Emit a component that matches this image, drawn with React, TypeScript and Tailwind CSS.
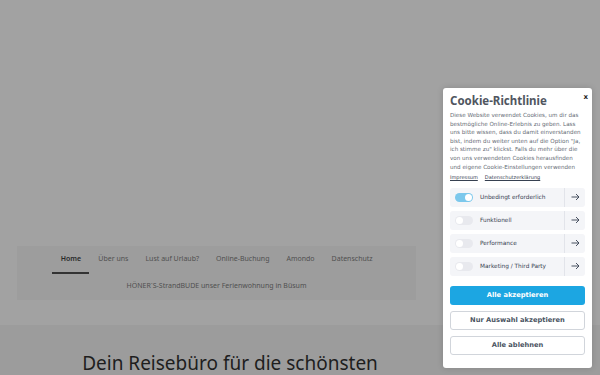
const navItems = ['Home', 'Über uns', 'Lust auf Urlaub?', 'Online-Buchung', 'Amondo', 'Datenschutz'];

const categories = [
  { label: 'Unbedingt erforderlich', on: true },
  { label: 'Funktionell', on: false },
  { label: 'Performance', on: false },
  { label: 'Marketing / Third Party', on: false },
];

const Arrow = () => (
  <svg width="9" height="8" viewBox="0 0 9 8" fill="none" stroke="#374151" strokeWidth="0.9">
    <path d="M0.5 4H8M5 1L8 4L5 7" />
  </svg>
);

export default function App() {
  return (
    <div className="relative h-[375px] w-[600px] overflow-hidden bg-[#a2a2a2] font-['Noto_Sans',sans-serif]">
      {/* page behind overlay */}
      <div className="flex h-full flex-col">
        <div className="h-[246px] shrink-0" />
        <div className="mx-[17px] flex h-[54px] w-[399px] shrink-0 flex-col items-center bg-[#9d9d9d]">
          <nav className="mt-[7px] flex gap-[17px] text-[7px] text-[#505050]">
            {navItems.map((item, i) => (
              <div key={item} className="flex flex-col items-center">
                <span className={`leading-[12px] ${i === 0 ? 'font-semibold text-[#2a2a2a]' : ''}`}>{item}</span>
                {i === 0 && <div className="-mx-[8px] mt-[7px] h-[2px] w-[37px] shrink-0 bg-[#333]" />}
              </div>
            ))}
          </nav>
          <p className="mt-[7px] text-[7px] text-[#505050]">HÖNER´S-StrandBUDE unser Ferienwohnung in Büsum</p>
        </div>
        <div className="h-[25px] shrink-0" />
        <div className="flex flex-1 justify-center bg-[#9c9c9c] pt-[24px] pr-[140px]">
          <h1 className="whitespace-nowrap text-[19px] leading-[28px] text-[#1e1e1e]">Dein Reisebüro für die schönsten</h1>
        </div>
      </div>

      {/* cookie modal */}
      <div className="absolute left-[443px] top-[88px] flex h-[280px] w-[149px] flex-col rounded-[3px] bg-white px-[7px] pt-[5px] shadow-[0_0_6px_rgba(0,0,0,0.15)]">
        <div className="flex items-start justify-between">
          <h2 className="text-[11.5px] font-bold leading-[16px] text-[#50565f]">Cookie-Richtlinie</h2>
          <span className="-mr-[3px] -mt-[1px] font-['DejaVu_Sans',sans-serif] text-[7px] font-bold text-[#222]">x</span>
        </div>
        <p className="mt-[2px] font-['DejaVu_Sans',sans-serif] text-[5.6px] leading-[8.6px] text-[#656b75]">
          Diese Website verwendet Cookies, um dir das bestmögliche Online-Erlebnis zu geben. Lass uns bitte wissen, dass du damit einverstanden bist, indem du weiter unten auf die Option "Ja, ich stimme zu" klickst. Falls du mehr über die von uns verwendeten Cookies herausfinden und eigene Cookie-Einstellungen verwenden
        </p>
        <div className="mt-[3px] flex gap-[7px] font-['DejaVu_Sans',sans-serif] text-[5px] text-[#374151]">
          <span className="underline">Impressum</span>
          <span className="underline">Datenschutzerklärung</span>
        </div>
        <div className="mt-[6px] flex flex-col gap-[4px]">
          {categories.map((c) => (
            <div key={c.label} className="flex h-[19px] items-center rounded-[3px] bg-[#f4f5f8]">
              <div className="flex flex-1 items-center gap-[7px] pl-[5px]">
                <div className={`flex h-[9px] w-[18px] items-center rounded-full px-[1px] ${c.on ? 'justify-end bg-[#7cc8ec]' : 'justify-start bg-[#e8e9ee]'}`}>
                  <div className="h-[7px] w-[7px] rounded-full bg-white" />
                </div>
                <span className="font-['DejaVu_Sans',sans-serif] text-[5.8px] text-[#374151]">{c.label}</span>
              </div>
              <div className="flex h-full w-[21px] items-center justify-center border-l border-[#e2e4ea]">
                <Arrow />
              </div>
            </div>
          ))}
        </div>
        <div className="mt-[10px] flex flex-col gap-[6px] font-['DejaVu_Sans',sans-serif] text-[6.7px] font-bold">
          <button className="h-[19px] rounded-[3px] bg-[#1ca6e2] text-white">Alle akzeptieren</button>
          <button className="h-[19px] rounded-[3px] border border-[#d1d5db] bg-white text-[#4b5563]">Nur Auswahl akzeptieren</button>
          <button className="h-[19px] rounded-[3px] border border-[#d1d5db] bg-white text-[#4b5563]">Alle ablehnen</button>
        </div>
      </div>
    </div>
  );
}
